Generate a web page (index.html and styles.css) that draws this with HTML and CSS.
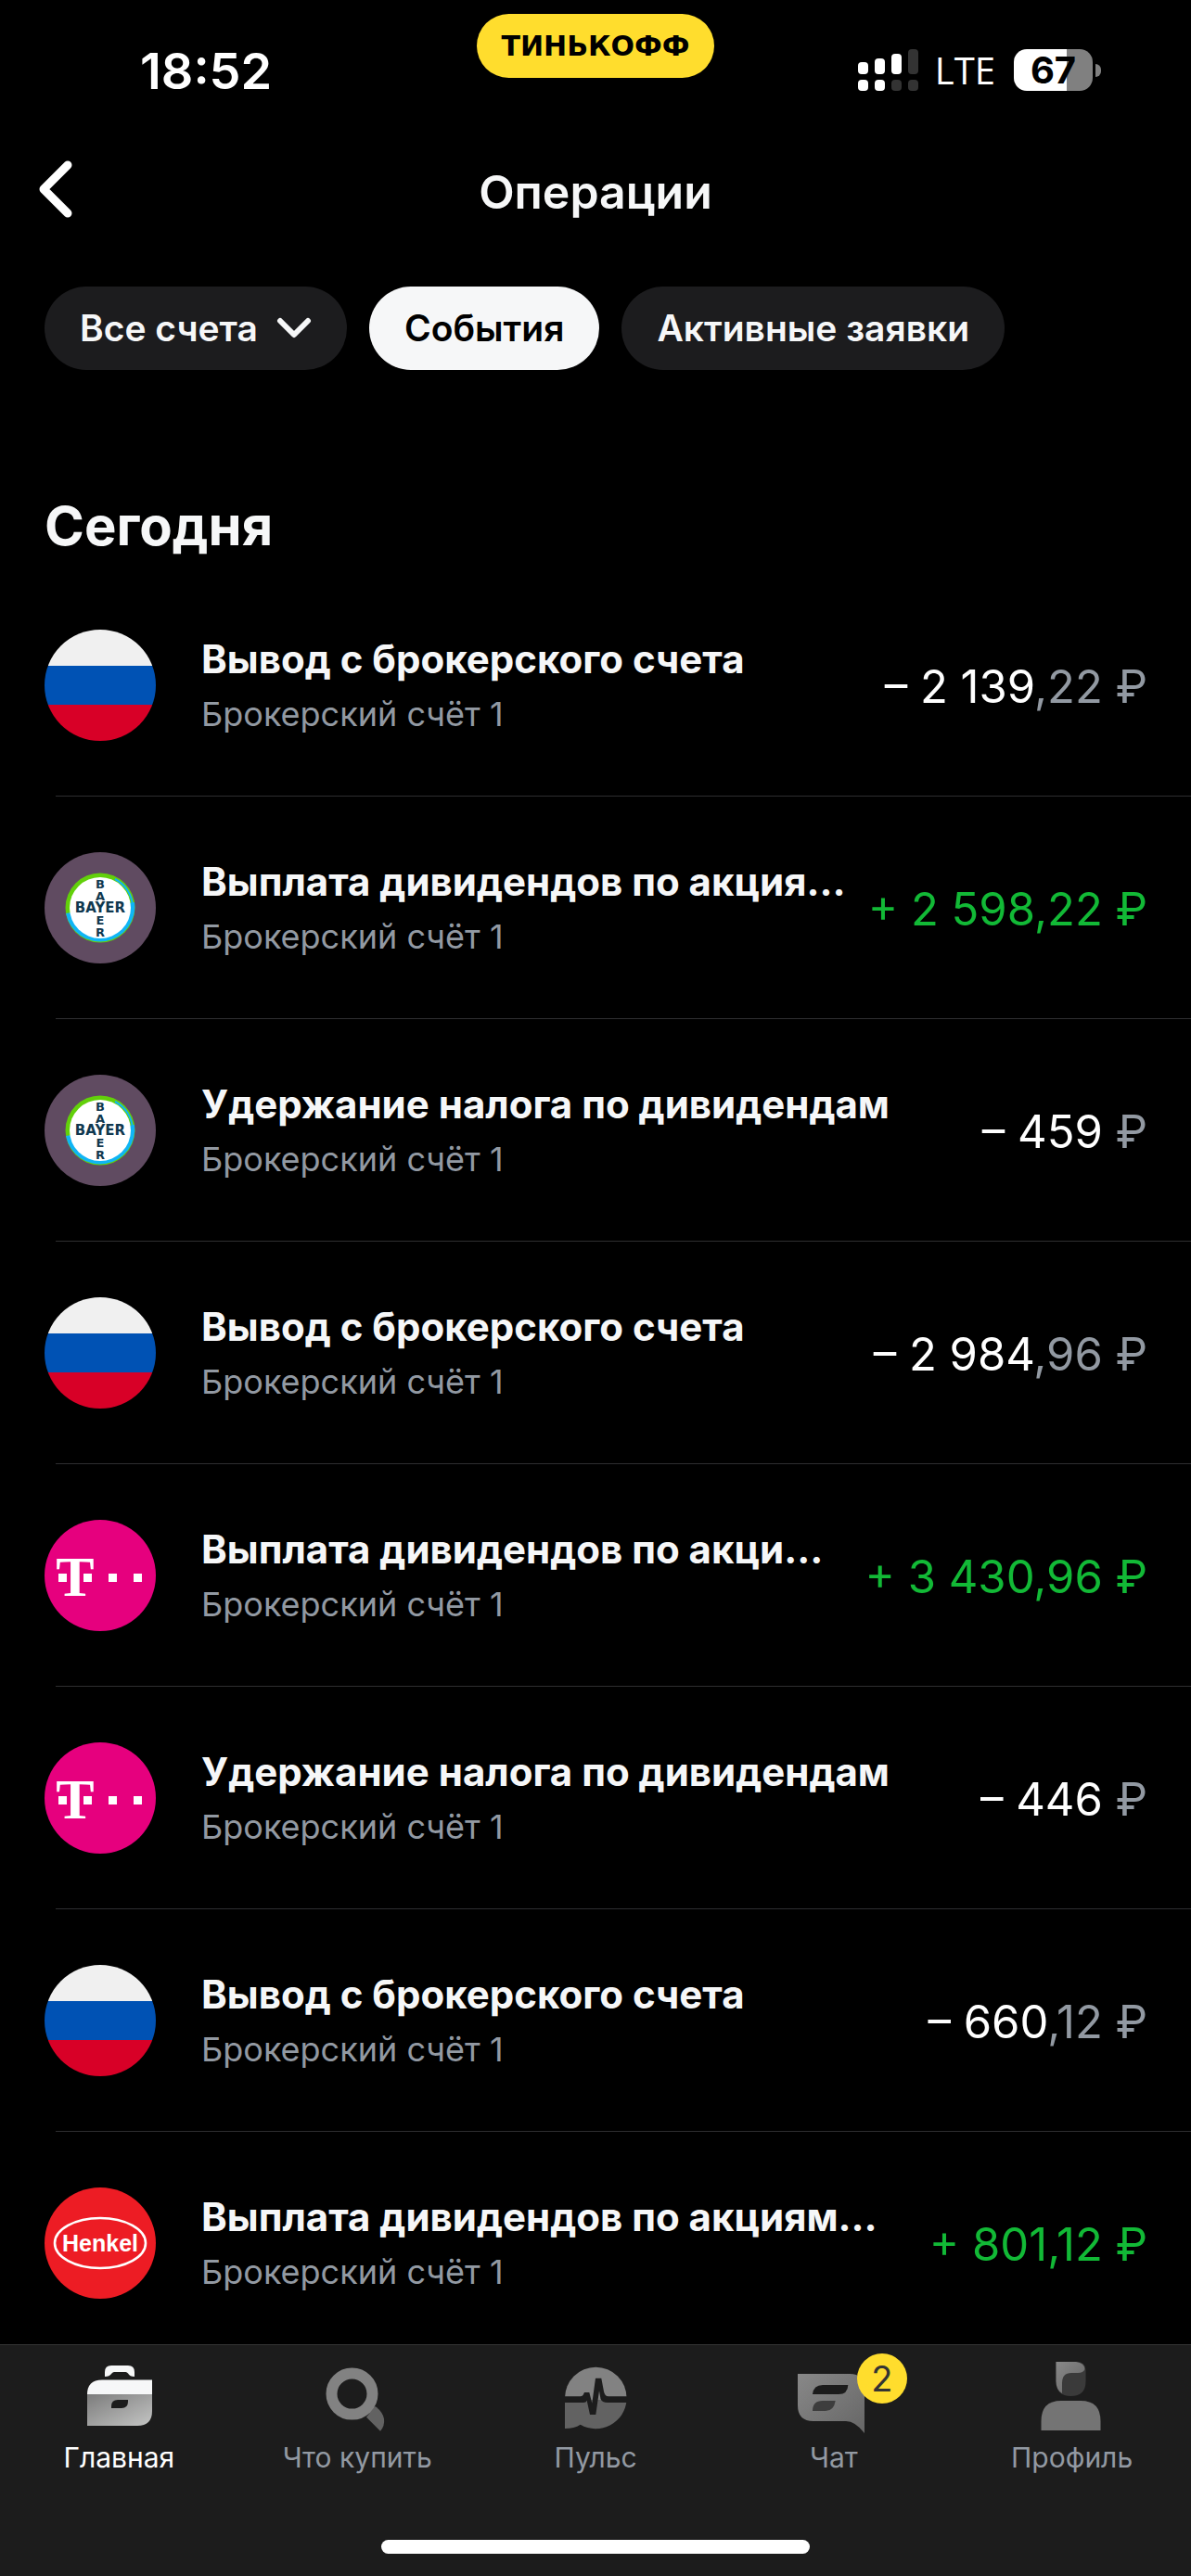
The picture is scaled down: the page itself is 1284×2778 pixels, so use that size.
FILE: index.html
```html
<!DOCTYPE html>
<html lang="ru">
<head>
<meta charset="utf-8">
<meta name="viewport" content="width=device-width, initial-scale=1">
<title>Операции</title>
<link rel="stylesheet" href="styles.css">
</head>
<body>
<svg class="sprite" aria-hidden="true">
  <defs>
    <linearGradient id="case-fill" x1="0" y1="0" x2="1" y2="1">
      <stop offset="0" stop-color="#7c7c7c"/><stop offset="1" stop-color="#c4c5c4"/>
    </linearGradient>
    <linearGradient id="gray-fill" x1="0" y1="0" x2="1" y2="1">
      <stop offset="0" stop-color="#888"/><stop offset="1" stop-color="#666"/>
    </linearGradient>
  </defs>
  <symbol id="flag-ru" viewBox="0 0 120 120">
    <rect width="120" height="39" fill="#f0f0f0"/>
    <rect y="39" width="120" height="42" fill="#0052b4"/>
    <rect y="81" width="120" height="39" fill="#d80027"/>
  </symbol>
  <symbol id="bayer-ring" viewBox="0 0 120 120">
    <rect width="120" height="120" fill="#604b61"/>
    <circle cx="60" cy="60" r="37.500" fill="#62d00a"/>
    <path d="M97 54A37.500 37.500 0 0 1 23 66Z" fill="#10b5f5"/>
    <circle cx="60" cy="60" r="33" fill="#fff"/>
    <path d="M76 29A35 35 0 0 1 95 58" fill="none" stroke="#10b5f5" stroke-width="2"/>
  </symbol>
</svg>

<div class="app">
  <header>
    <div class="status">
      <time class="clock">18:52</time>
      <span class="brand">ТИНЬКОФФ</span>
      <div class="indicators">
        <svg class="signal" viewBox="0 0 65 45" width="65" height="45" aria-hidden="true">
          <g fill="#fff">
            <rect y="14" width="11" height="13" rx="4"/><rect x="18" y="10" width="11" height="17" rx="4"/><rect x="36" y="5" width="11" height="22" rx="4"/>
            <rect y="33" width="11" height="12" rx="4"/><rect x="18" y="33" width="11" height="12" rx="4"/>
          </g>
          <g fill="#333">
            <rect x="54" width="11" height="27" rx="4"/><rect x="36" y="33" width="11" height="12" rx="4"/><rect x="54" y="33" width="11" height="12" rx="4"/>
          </g>
        </svg>
        <span class="network">LTE</span>
        <span class="battery"><span class="charge">67</span><span class="nub"></span></span>
      </div>
    </div>
    <div class="toolbar">
      <button class="back" type="button" aria-label="Назад">
        <svg viewBox="0 0 36 62" width="36" height="62"><path d="M31 5L5 31L31 57" fill="none" stroke="#fff" stroke-width="9" stroke-linecap="round" stroke-linejoin="round"/></svg>
      </button>
      <h1 class="title">Операции</h1>
    </div>
    <div class="filters">
      <label class="chip">
        <select class="account" aria-label="Счета"><option>Все счета</option></select>
        <svg viewBox="0 0 38 24" width="38" height="24" aria-hidden="true"><path d="M4 4L19 19L34 4" fill="none" stroke="#f6f7f8" stroke-width="6" stroke-linecap="round" stroke-linejoin="round"/></svg>
      </label>
      <button class="chip chip-active" type="button">События</button>
      <button class="chip" type="button">Активные заявки</button>
    </div>
  </header>

  <main class="feed">
    <h2 class="day">Сегодня</h2>
    <ul class="operations">
      <li class="operation">
        <svg class="logo"><use href="#flag-ru"/></svg>
        <div class="info"><span class="name">Вывод с брокерского счета</span><span class="source">Брокерский счёт 1</span></div>
        <span class="amount">– 2 139<span class="minor">,22 ₽</span></span>
      </li>
      <li class="operation">
        <svg class="logo" viewBox="0 0 120 120">
          <use href="#bayer-ring"/>
          <g class="bayer-text" text-anchor="middle">
            <text x="60" y="39">B</text><text x="60" y="52">A</text><text class="bayer-wide" x="60" y="65">BAYER</text><text x="60" y="78">E</text><text x="60" y="91">R</text>
          </g>
        </svg>
        <div class="info"><span class="name">Выплата дивидендов по акция…</span><span class="source">Брокерский счёт 1</span></div>
        <span class="amount income">+ 2 598,22 ₽</span>
      </li>
      <li class="operation">
        <svg class="logo" viewBox="0 0 120 120">
          <use href="#bayer-ring"/>
          <g class="bayer-text" text-anchor="middle">
            <text x="60" y="39">B</text><text x="60" y="52">A</text><text class="bayer-wide" x="60" y="65">BAYER</text><text x="60" y="78">E</text><text x="60" y="91">R</text>
          </g>
        </svg>
        <div class="info"><span class="name">Удержание налога по дивидендам</span><span class="source">Брокерский счёт 1</span></div>
        <span class="amount">– 459<span class="minor"> ₽</span></span>
      </li>
      <li class="operation">
        <svg class="logo"><use href="#flag-ru"/></svg>
        <div class="info"><span class="name">Вывод с брокерского счета</span><span class="source">Брокерский счёт 1</span></div>
        <span class="amount">– 2 984<span class="minor">,96 ₽</span></span>
      </li>
      <li class="operation">
        <svg class="logo" viewBox="0 0 120 120">
          <rect width="120" height="120" fill="#e6007e"/>
          <text class="telekom-text" x="33" y="82" text-anchor="middle">T</text>
          <path d="M15 58h9v9h-9zM42 58h9v9h-9zM69 58h9v9h-9zM96 58h9v9h-9z" fill="#fff"/>
        </svg>
        <div class="info"><span class="name">Выплата дивидендов по акци…</span><span class="source">Брокерский счёт 1</span></div>
        <span class="amount income">+ 3 430,96 ₽</span>
      </li>
      <li class="operation">
        <svg class="logo" viewBox="0 0 120 120">
          <rect width="120" height="120" fill="#e6007e"/>
          <text class="telekom-text" x="33" y="82" text-anchor="middle">T</text>
          <path d="M15 58h9v9h-9zM42 58h9v9h-9zM69 58h9v9h-9zM96 58h9v9h-9z" fill="#fff"/>
        </svg>
        <div class="info"><span class="name">Удержание налога по дивидендам</span><span class="source">Брокерский счёт 1</span></div>
        <span class="amount">– 446<span class="minor"> ₽</span></span>
      </li>
      <li class="operation">
        <svg class="logo"><use href="#flag-ru"/></svg>
        <div class="info"><span class="name">Вывод с брокерского счета</span><span class="source">Брокерский счёт 1</span></div>
        <span class="amount">– 660<span class="minor">,12 ₽</span></span>
      </li>
      <li class="operation">
        <svg class="logo" viewBox="0 0 120 120">
          <rect width="120" height="120" fill="#ed1c24"/>
          <ellipse cx="60" cy="60" rx="49" ry="27" fill="none" stroke="#fff" stroke-width="2.600"/>
          <text class="henkel-text" x="60" y="69" text-anchor="middle">Henkel</text>
        </svg>
        <div class="info"><span class="name">Выплата дивидендов по акциям…</span><span class="source">Брокерский счёт 1</span></div>
        <span class="amount income">+ 801,12 ₽</span>
      </li>
    </ul>
  </main>

  <footer class="dock">
    <nav class="tabs">
      <a class="tab tab-active" href="#home">
        <span class="icon"><svg viewBox="0 0 84 80" width="84" height="80" aria-hidden="true">
          <path d="M27 17V12Q27 5 34 5H52Q59 5 59 12V17Q54 17 52 13.500Q51 12 49.500 12H37Q35.500 12 34.500 13.500Q32 17 27 17Z" fill="#f6f7f8"/>
          <path d="M8 36.500Q8 20.500 24 20.500H78V36.500Z" fill="#f6f7f8"/>
          <path d="M8 36H78V54Q78 70 62 70H8Z" fill="url(#case-fill)"/>
          <path d="M34 51V49Q34 42 41 42H52V44Q52 51 45 51Z" fill="#1c1c1c"/>
        </svg></span>
        <span>Главная</span>
      </a>
      <a class="tab" href="#buy">
        <span class="icon"><svg viewBox="0 0 84 80" width="84" height="80" aria-hidden="true">
          <path d="M52 60.700L61 49L63 50Q70 56 71 62.500Q72 70 67 75.700Z" fill="#626262"/>
          <circle cx="36.500" cy="35.600" r="22" fill="#1c1c1c" stroke="#828282" stroke-width="12"/>
        </svg></span>
        <span>Что купить</span>
      </a>
      <a class="tab" href="#pulse">
        <span class="icon"><svg viewBox="0 0 84 80" width="84" height="80" aria-hidden="true">
          <path d="M9 40A33.300 33.300 0 0 1 75.600 40V42H9Z" fill="#828282"/>
          <path d="M9 42H75.600A33.300 33.300 0 0 1 25.700 68.700Q19 73 9 73Z" fill="#626262"/>
          <path d="M8 38.300H26Q28 38.300 28.800 36.500L30 34H35.300L38.300 45.700L42 18.700H48.300L51 33Q52 38.300 56 38.300H77V45H55Q49 45 47.500 41L46 32.300L42.300 58H36L32.700 42.700Q32 45 29 45H8Z" fill="#1c1c1c"/>
        </svg></span>
        <span>Пульс</span>
      </a>
      <a class="tab" href="#chat">
        <span class="icon"><svg viewBox="0 0 84 80" width="84" height="80" aria-hidden="true">
          <path d="M3 14H59Q75 14 75 30V78Q65 65 55 65H20Q3 65 3 48Z" fill="url(#gray-fill)"/>
          <path d="M19 36Q20 26 30 26H57.300Q57 36 47 36Z" fill="#1c1c1c"/>
          <path d="M19 54Q19 43 30 43H43.700Q42 54 33 54Z" fill="#3d3d3d"/>
        </svg><span class="badge">2</span></span>
        <span>Чат</span>
      </a>
      <a class="tab" href="#profile">
        <span class="icon"><svg viewBox="0 0 84 80" width="84" height="80" aria-hidden="true">
          <path d="M24.500 1H46Q56.500 1 56.500 10V22Q56.500 38 40.500 38Q24.500 38 24.500 22Z" fill="#3a3a3a"/>
          <path d="M24.500 1H46Q55 2 55.500 9Q54 13 48 13H41Q31 13 31 24V35Q24.500 31 24.500 22Z" fill="url(#gray-fill)"/>
          <path d="M8.500 75V65Q8.500 43 30 43H51Q72.500 43 72.500 65V75Z" fill="#747474"/>
        </svg></span>
        <span>Профиль</span>
      </a>
    </nav>
    <div class="home-bar"></div>
  </footer>
</div>
</body>
</html>
```

FILE: styles.css
```css
* {
  box-sizing: border-box;
}

body {
  margin: 0;
  background: #000;
  color: #f6f7f8;
  font-family: Inter, "Liberation Sans", sans-serif;
}

button,
select {
  border: 0;
  padding: 0;
  background: none;
  color: inherit;
  font: inherit;
}

.sprite {
  position: absolute;
  width: 0;
  height: 0;
}

/* The list scrolls between the header and the dock */
.app {
  display: flex;
  flex-direction: column;
  height: 100vh;
}

/* Status bar */
.status {
  display: grid;
  grid-template-columns: 1fr auto 1fr;
  align-items: start;
  height: 144px;
  padding-top: 15px;
}

.clock {
  padding: 30px 0 0 151px;
  color: #fff;
  font-size: 54px;
  line-height: 64px;
  font-weight: 600;
}

.brand {
  padding: 0 26px;
  border-radius: 35px;
  background: #ffdd2d;
  color: #000;
  font: bold 30px/69px "DejaVu Sans", sans-serif;
}

.indicators {
  display: flex;
  justify-content: flex-end;
  align-items: center;
  padding: 38px 106px 0 0;
}

.network {
  margin: 0 20px 0 18px;
  color: #fff;
  font: 500 40px/45px "Open Sans", sans-serif;
}

.battery {
  position: relative;
}

.charge {
  display: block;
  width: 85px;
  border-radius: 14px;
  background: linear-gradient(90deg, #fff 67%, #808080 67%);
  color: #000;
  font-size: 40px;
  line-height: 45px;
  font-weight: 700;
  text-align: center;
}

.nub {
  position: absolute;
  left: 88px;
  top: 16px;
  width: 6px;
  height: 14px;
  border-radius: 0 6px 6px 0;
  background: #808080;
}

/* Title and filters */
.toolbar {
  display: grid;
  grid-template-columns: 1fr auto 1fr;
  align-items: center;
  height: 126px;
  padding: 0 42px;
}

.back {
  justify-self: start;
  display: flex;
  padding-bottom: 6px;
}

.title {
  margin: 0;
  font-size: 50px;
  line-height: 60px;
  font-weight: 600;
}

.filters {
  display: flex;
  gap: 24px;
  padding: 39px 48px 0;
}

.chip {
  display: flex;
  align-items: center;
  gap: 20px;
  height: 90px;
  padding: 0 38px;
  border-radius: 45px;
  background: #1c1c1e;
  font-size: 39px;
  line-height: 48px;
  font-weight: 600;
  white-space: nowrap;
}

.chip-active {
  background: #f6f7f8;
  color: #000;
}

.account {
  appearance: none;
}

/* Operations */
.feed {
  flex: 1;
  min-height: 0;
  padding-top: 134px;
  overflow-y: auto;
  scrollbar-width: none;
}

.day {
  margin: 0;
  padding: 0 48px 18px;
  font-size: 58px;
  line-height: 68px;
  font-weight: 700;
}

.operations {
  margin: 0;
  padding: 0 0 0 60px;
  list-style: none;
}

.operation {
  display: flex;
  align-items: center;
  height: 240px;
  padding-right: 47px;
  border-bottom: 1px solid #2e2e30;
}

.logo {
  flex: none;
  width: 120px;
  height: 120px;
  margin-left: -12px;
  border-radius: 50%;
}

.info {
  flex: 1;
  min-width: 0;
  display: flex;
  flex-direction: column;
  gap: 11px;
  padding: 0 24px 0 49px;
  white-space: nowrap;
}

.name {
  font-size: 42px;
  line-height: 52px;
  font-weight: 700;
}

.source {
  color: #9299a2;
  font-size: 36px;
  line-height: 44px;
}

.amount {
  flex: none;
  padding-top: 4px;
  color: #fff;
  font-size: 49px;
  line-height: 60px;
}

.minor {
  color: #9299a2;
}

.income {
  color: #12b936;
}

.bayer-text {
  fill: #10384f;
  font: bold 13px "DejaVu Sans", sans-serif;
}

.bayer-wide {
  font-size: 15px;
}

.telekom-text {
  fill: #fff;
  font: bold 62px "Liberation Serif", serif;
}

.henkel-text {
  fill: #fff;
  font: bold 25px "Liberation Sans", sans-serif;
}

/* Bottom navigation */
.dock {
  padding: 17px 0 24px;
  border-top: 1px solid #333;
  background: #1c1c1c;
}

.tabs {
  display: grid;
  grid-template-columns: repeat(5, 1fr);
}

.tab {
  display: flex;
  flex-direction: column;
  align-items: center;
  gap: 6px;
  color: #9299a2;
  font-size: 30px;
  line-height: 36px;
  text-decoration: none;
}

.tab-active {
  color: #fff;
}

.icon {
  position: relative;
  display: flex;
}

.badge {
  position: absolute;
  left: 67px;
  top: -8px;
  width: 54px;
  border-radius: 50%;
  background: #ffdd2d;
  color: #333;
  font-size: 38px;
  line-height: 54px;
  text-align: center;
}

.home-bar {
  width: 36%;
  height: 15px;
  margin: 71px auto 0;
  border-radius: 8px;
  background: #fff;
}
```
